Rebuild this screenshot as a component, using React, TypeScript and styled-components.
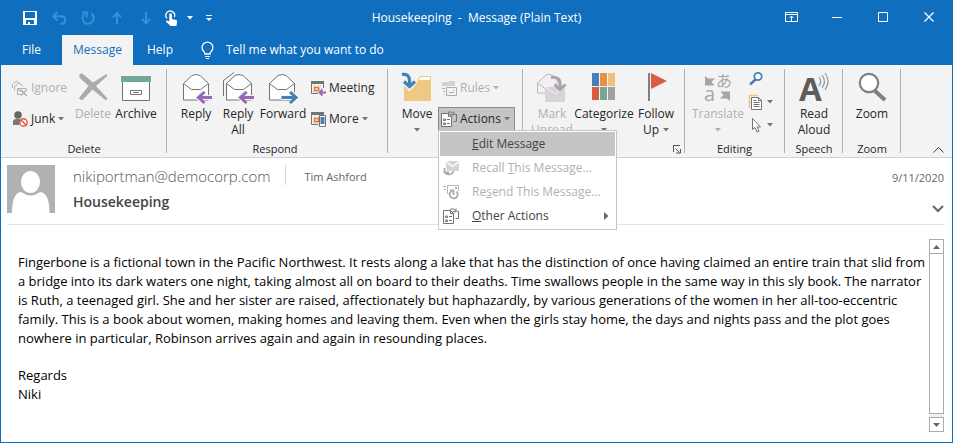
import React from "react";
import styled, { createGlobalStyle, css } from "styled-components";

const BLUE = "#106ebe";
const GREY = "#737373";

const GlobalStyle = createGlobalStyle`
  *, *::before, *::after { box-sizing: border-box; }
  html, body { margin: 0; padding: 0; }
  body { font-family: "Open Sans", "Noto Sans", sans-serif; font-size: 12px; color: #262626; background: #fff; }
  button, input { font: inherit; color: inherit; }
  svg { display: block; flex: none; overflow: visible; }
`;

const plainButton = css`
  appearance: none;
  margin: 0;
  padding: 0;
  border: 0;
  background: transparent;
  line-height: 16px;
`;

const Window = styled.div`
  display: flex;
  flex-direction: column;
  min-height: 100vh;
  border: 1px solid ${BLUE};
  background: #fff;
`;

const TitleBar = styled.header`
  display: grid;
  grid-template-columns: 1fr auto 1fr;
  align-items: center;
  height: 34px;
  background: ${BLUE};
  color: #fff;
`;

const QuickAccess = styled.div`
  display: flex;
  align-items: center;
  padding-left: 20px;
`;

const QuickButton = styled.button<{ $faded?: boolean; $width?: number }>`
  ${plainButton}
  display: flex;
  align-items: center;
  justify-content: center;
  width: ${(p) => p.$width ?? 28}px;
  height: 24px;
  color: ${(p) => (p.$faded ? "#3a90d6" : "#fff")};
`;

const Title = styled.h1`
  margin: 0;
  font-size: 12px;
  font-weight: 400;
  line-height: 16px;
  white-space: pre;
`;

const WindowControls = styled.div`
  display: flex;
  justify-content: flex-end;
`;

const ControlButton = styled.button`
  ${plainButton}
  display: flex;
  align-items: center;
  justify-content: center;
  width: 46px;
  height: 30px;
  color: #fff;
`;

const TabBar = styled.nav`
  display: flex;
  height: 30px;
  background: ${BLUE};
  color: #fff;
`;

const Tab = styled.button<{ $active?: boolean; $width: number }>`
  ${plainButton}
  width: ${(p) => p.$width}px;
  background: ${(p) => (p.$active ? "#f3f3f3" : "transparent")};
  color: ${(p) => (p.$active ? BLUE : "#fff")};
  text-align: center;
`;

const TellMe = styled.button`
  ${plainButton}
  display: flex;
  align-items: center;
  gap: 12px;
  padding-left: 14px;
`;

const Ribbon = styled.section`
  display: flex;
  height: 93px;
  background: #f3f3f3;
  border-bottom: 1px solid #d2d2d2;
`;

const Group = styled.section<{ $left?: number; $right?: number }>`
  display: flex;
  flex-direction: column;
  position: relative;
  padding: 0 ${(p) => p.$right ?? 6}px 0 ${(p) => p.$left ?? 8}px;
`;

const GroupBody = styled.div`
  display: flex;
  flex: 1;
`;

const GroupLabel = styled.h2`
  margin: 0;
  font-size: 11px;
  font-weight: 400;
  line-height: 16px;
  text-align: center;
`;

const Divider = styled.span`
  width: 1px;
  margin: 4px 0;
  background: #b1b1b1;
`;

const BigButton = styled.button<{ $width: number }>`
  ${plainButton}
  display: flex;
  flex-direction: column;
  align-items: center;
  width: ${(p) => p.$width}px;
  padding-top: 7px;
  white-space: nowrap;
  &:disabled { color: #b1b1b1; }
  svg + span { margin-top: 2px; }
`;

const BigLine = styled.span`
  display: flex;
  align-items: center;
  justify-content: center;
  gap: 4px;
  height: 16px;
`;

const SmallColumn = styled.div<{ $width?: number; $top?: number; $gap?: number }>`
  display: flex;
  flex-direction: column;
  gap: ${(p) => p.$gap ?? 7}px;
  width: ${(p) => (p.$width ? `${p.$width}px` : "auto")};
  padding-top: ${(p) => p.$top ?? 11}px;
`;

const SmallButton = styled.button<{ $pressed?: boolean; $height?: number }>`
  ${plainButton}
  display: flex;
  align-items: center;
  gap: 3px;
  height: ${(p) => p.$height ?? 24}px;
  padding: 0 2px;
  border: 1px solid ${(p) => (p.$pressed ? "#8a8a8a" : "transparent")};
  background: ${(p) => (p.$pressed ? "#c5c5c5" : "transparent")};
  white-space: nowrap;
  &:disabled { color: #b1b1b1; }
`;

const MenuAnchor = styled.div`
  display: grid;
  position: relative;
`;

const Menu = styled.div`
  position: absolute;
  top: 100%;
  left: 0;
  z-index: 2;
  width: 179px;
  margin-top: -1px;
  padding: 1px;
  border: 1px solid #c6c6c6;
  background: #fff;
`;

const MenuItem = styled.button<{ $hot?: boolean }>`
  ${plainButton}
  display: grid;
  grid-template-columns: 32px 1fr 14px;
  align-items: center;
  width: 100%;
  height: 24px;
  color: #444;
  background: ${(p) => (p.$hot ? "#c5c5c5" : "transparent")};
  text-align: left;
  white-space: nowrap;
  &:disabled { color: #b1b1b1; }
  svg { margin-left: 3px; }
`;

const Launcher = styled.button`
  ${plainButton}
  position: absolute;
  right: 3px;
  bottom: 3px;
`;

const CollapseButton = styled.button`
  ${plainButton}
  align-self: flex-end;
  margin-left: auto;
  padding: 0 8px 4px;
`;

const MessageHeader = styled.header`
  display: flex;
  margin: 0 7px 0 6px;
  padding: 7px 0 11px;
  border-bottom: 1px solid #e1e1e1;
`;

const HeaderText = styled.div`
  flex: 1;
  padding-left: 18px;
`;

const SenderRow = styled.div`
  display: flex;
  height: 20px;
`;

const Sender = styled.span`
  color: #555;
  font-size: 15px;
  font-weight: 300;
  line-height: 22px;
`;

const Recipient = styled.span`
  margin-left: 15px;
  padding-left: 18px;
  border-left: 1px solid #d8d8d8;
  color: #666;
  font-size: 11px;
  line-height: 24px;
`;

const Subject = styled.h2`
  margin: 7px 0 0;
  color: #444;
  font-size: 14px;
  font-weight: 600;
  line-height: 20px;
`;

const HeaderSide = styled.div`
  display: flex;
  flex-direction: column;
  justify-content: space-between;
  align-items: flex-end;
  padding: 5px 1px 0 0;
  color: #666;
  font-size: 11px;
  line-height: 16px;
`;

const Content = styled.main`
  display: flex;
  flex: 1;
  gap: 2px;
  padding: 14px 8px 10px 17px;
`;

const Letter = styled.article`
  flex: 1;
  min-width: 0;
  padding-top: 14px;
  color: #000;
  font-size: 13px;
  line-height: 19px;
  white-space: nowrap;
  p { margin: 0 0 18px; }
`;

const ScrollBar = styled.div`
  display: flex;
  flex: none;
  flex-direction: column;
  width: 15px;
  background: #f0f0f0;
`;

const ScrollButton = styled.button`
  ${plainButton}
  display: flex;
  align-items: center;
  justify-content: center;
  height: 15px;
  border: 1px solid #ababab;
  background: #fff;
`;

const ScrollThumb = styled.div`
  flex: 1;
  margin-bottom: 3px;
  border: 1px solid #ababab;
  border-top: 0;
  background: #fff;
`;

const Caret = ({ color = GREY }: { color?: string }) => (
  <svg width="6" height="4" viewBox="0 0 6 4"><path d="M0 0h6L3 3.5z" fill={color} /></svg>
);

type IconProps = { size?: number; children: React.ReactNode };
const Icon = ({ size = 16, children }: IconProps) => (
  <svg width={size} height={size} viewBox={`0 0 ${size} ${size}`} fill="none" aria-hidden="true">{children}</svg>
);

const SaveIcon = () => (
  <Icon><path d="M1 1h14v14H1z" fill="#fff" /><path d="M3 2h10v6H3zM4 10h8v4H4z" fill={BLUE} /><path d="M6 12h2v2H6z" fill="#fff" /></Icon>
);
const UndoIcon = () => (
  <Icon><path d="M6.5 2L2.2 6.2l4.3 4.3M2.5 6.2h8a3.8 3.8 0 0 1 0 7.6H9" stroke="currentColor" strokeWidth="2" /></Icon>
);
const RepeatIcon = () => (
  <Icon><path d="M11 3.3a5.6 5.6 0 1 1-6.4.5M2 2.3h4.8v5" stroke="currentColor" strokeWidth="2" /></Icon>
);
const UpIcon = () => (
  <Icon><path d="M8 14V3M4 7.2L8 3l4 4.2" stroke="currentColor" strokeWidth="2" /></Icon>
);
const DownIcon = () => (
  <Icon><path d="M8 2v11M4 9l4 4.2L12 9" stroke="currentColor" strokeWidth="2" /></Icon>
);
const TouchIcon = () => (
  <Icon>
    <path d="M4 8.4A4.4 4.4 0 1 1 11.4 7" stroke="#fff" strokeWidth="1.3" />
    <path d="M6.3 4.6a1.3 1.3 0 0 1 2.6 0V9l4.3 1q1 .3.8 1.4L13.5 16H7.6L2.8 11.4q.8-1.4 2.2-.6l1.3.8z" fill="#fff" />
  </Icon>
);
const CustomizeIcon = () => (
  <svg width="6" height="6" viewBox="0 0 6 6"><path d="M0 0h6v1H0zM0 3h6L3 6z" fill="#fff" /></svg>
);
const BulbIcon = () => (
  <svg width="13" height="17" viewBox="0 0 13 17" fill="none">
    <path d="M4 12c0-2.5-3-3-3-6.4a5.4 5.4 0 0 1 10.9 0C11.9 9 9 9.5 9 12z" stroke="#fff" strokeWidth="1.3" />
    <path d="M4 14.5h5M5 16.5h3" stroke="#fff" />
  </svg>
);

const IgnoreIcon = () => (
  <Icon>
    <path d="M.5 8V4.5L4.5 1l4 3M2.5 10V6.5L6.5 3l4.5 3M9 14.5H5.5v-6h9" stroke="#b1b1b1" />
    <path d="M5.5 8.5l3.5 3M9 10l6 6M15 9.5l-6 6" stroke="#b1b1b1" strokeWidth="1.3" />
  </Icon>
);
const JunkIcon = () => (
  <Icon>
    <circle cx="6" cy="4" r="3.8" fill="#666" />
    <path d="M1 14V10.5Q1 8 4 8h4l1 1-2 5z" fill="#777" />
    <circle cx="11.5" cy="11.5" r="3.7" fill="#fff" stroke="#dc5939" strokeWidth="1.4" />
    <path d="M9 9l5 5" stroke="#dc5939" strokeWidth="1.4" />
  </Icon>
);
const DeleteIcon = () => (
  <Icon size={32}><path d="M2 3.5Q3.5 0 7 3L16 10.5 29.5 2l1 1.8L19 14 30.5 26.5 29 28.5 15.5 17.5 6 27.5q-2.5 1.5-4-1.5L11.5 14 3 6z" fill="#ababab" /></Icon>
);
const ArchiveIcon = () => (
  <Icon size={32}>
    <path d="M2.5 9.5h27v19h-27z" fill="#fff" stroke={GREY} />
    <path d="M1 4h30v6H1z" fill="#73a896" />
    <path d="M10.5 18.5h11v4h-11zM13 20.5h6" stroke={GREY} />
  </Icon>
);
const Envelope = ({ x = 3 }: { x?: number }) => (
  <g transform={`translate(${x} 0)`} stroke={GREY}>
    <path d="M.5 11.5L9 3.5q4-2 8 0l8.5 8v16.5H.5z" fill="#fff" />
    <path d="M.5 11.5l8 6h9l8-6" />
  </g>
);
const ReplyArrow = () => (
  <>
    <path d="M32 25.5H19M24.5 19l-6 6.5 6 6.5" stroke="#f3f3f3" strokeWidth="5" />
    <path d="M32 25.5H18.5M24.5 20l-6 5.5 6 5.5" stroke="#9668b8" strokeWidth="3" />
  </>
);
const ReplyIcon = () => (<Icon size={32}><Envelope /><ReplyArrow /></Icon>);
const ReplyAllIcon = () => (
  <Icon size={32}><path d="M1.5 24V8.5L12 .5" stroke={GREY} /><Envelope x={4} /><ReplyArrow /></Icon>
);
const ForwardIcon = () => (
  <Icon size={32}>
    <Envelope x={2} />
    <path d="M14 25.5h14M23 19l6 6.5-6 6.5" stroke="#f3f3f3" strokeWidth="5" />
    <path d="M14.5 25.5h14M23 20l6 5.5-6 5.5" stroke="#4680bb" strokeWidth="3" />
  </Icon>
);
const Calendar = () => (
  <>
    <path d="M1 1h13v3H1z" fill={GREY} />
    <path d="M1.5 4v9.5H8M13.5 4v4" stroke={GREY} />
    <path d="M4 6h2M8 6h4M3.5 12h5M9 9h3" stroke="#aaa" strokeDasharray="1 1" />
    <path d="M4.5 7.5h4v3h-4z" stroke="#e8762d" strokeWidth="1.5" />
  </>
);
const MeetingIcon = () => (
  <Icon><Calendar /><path d="M16 12.5H10M12.5 9.5l-3 3 3 3" stroke="#9668b8" strokeWidth="1.8" /></Icon>
);
const MoreIcon = () => (
  <Icon><Calendar /><path d="M9.5 4.5h6v11h-6z" fill="#fff" stroke={GREY} /><path d="M10.5 6h4v7h-4z" fill="#4680bb" /></Icon>
);
const MoveIcon = () => (
  <Icon size={32}>
    <path d="M3 12h12l4-8h11v25H3z" fill="#eec982" />
    <path d="M20 5h9v3H18z" fill="#fff" />
    <path d="M2 3.5q6-1 6.5 5v5.5M3.5 9.5l5 5.5 5-5.5" stroke="#f3f3f3" strokeWidth="6" />
    <path d="M1 2.5q7.5-1 7.5 6v6M3 9.5l5.5 5 5.5-5" stroke="#4680bb" strokeWidth="3.2" />
  </Icon>
);
const RulesIcon = () => (
  <Icon>
    <path d="M1 2h6l1-1h6v5H1z" fill="#d5d0d5" />
    <path d="M1 8.5h3M2 11.5h2M3 14.5h1" stroke="#b1b1b1" />
    <path d="M5.5 7.5h10v8h-10z" fill="#f3f3f3" stroke="#ababab" />
    <path d="M8 12.5h5M12 10.5h1" stroke="#ababab" />
  </Icon>
);
const ActionsIcon = () => (
  <Icon>
    <path d="M7 1.5Q10-.5 12.5 2.5M9.5 3.5l3.5.5V.5" stroke={GREY} />
    <path d="M14 3.5h1.5v7H12.5" stroke={GREY} />
    <path d="M.5 2.5h7l3 3v10H.5z" fill="#fff" stroke={GREY} />
    <path d="M7.5 2.5v3h3" stroke={GREY} />
    <path d="M2.5 8h2v1.5h-2zM2.5 12h2v1.5h-2zM6 8.5h3M6 12.5h3" stroke={GREY} />
  </Icon>
);
const MarkUnreadIcon = () => (
  <Icon size={32}>
    <path d="M1.5 11L10 3q3-1.5 6 0l5 3v15H1.5z" fill="#f3eff3" stroke="#b8b8b8" />
    <path d="M1.5 11l8 6" stroke="#b8b8b8" />
    <path d="M9 15h20v15H9z" fill="#d8d3d8" />
    <path d="M9 15l10 7 10-7" stroke="#f3f3f3" />
    <path d="M15 5.5q9-1 9 6v4M18.5 12.5l5.5 5 5.5-5" stroke="#a6a6a6" strokeWidth="3" />
  </Icon>
);
const CategorizeIcon = () => (
  <Icon size={32}>
    <path d="M4 1h7v13H4z" fill="#4680bb" /><path d="M12 1h7v13h-7z" fill="#e98f43" /><path d="M20 1h7v13h-7z" fill="#eac282" />
    <path d="M4 15h7v13H4z" fill="#d85d44" /><path d="M12 15h7v13h-7z" fill="#73a896" /><path d="M20 15h7v13h-7z" fill="#a0a0a0" />
  </Icon>
);
const FlagIcon = () => (
  <Icon size={32}><path d="M8 1h2v28H8z" fill="#808080" /><path d="M11 1l16 8-16 8z" fill="#d85d44" /></Icon>
);
const TranslateIcon = () => (
  <Icon size={32}>
    <path d="M3 4l3 2.5h7L9.5 10l3 3.5H3z" fill="#a6a6a6" />
    <path d="M28 29l-3-2.5h-7l3.5-3.5-3-3.5H28z" fill="#a6a6a6" />
    <text x="14" y="15" fontSize="16" fill="#a6a6a6" fontFamily="Noto Sans CJK JP, sans-serif">あ</text>
    <text x="2" y="29" fontSize="20" fill="#a6a6a6" fontFamily="Open Sans, sans-serif">a</text>
  </Icon>
);
const FindIcon = () => (
  <Icon><circle cx="10" cy="5.5" r="3.7" fill="#fff" stroke="#4680bb" strokeWidth="1.8" /><path d="M7.5 8.5L2 13.5" stroke="#4680bb" strokeWidth="2.5" /></Icon>
);
const RelatedIcon = () => (
  <Icon>
    <path d="M1.5 14V1.5H10" stroke="#eac282" strokeWidth="1.4" />
    <path d="M3.5 3.5h7l3 3v9h-10z" fill="#fff" stroke={GREY} />
    <path d="M10.5 3.5v3h3M5.5 6.5h3M5.5 8.5h6M5.5 10.5h6M5.5 12.5h6" stroke={GREY} />
  </Icon>
);
const SelectIcon = () => (
  <Icon><path d="M4.5 1.5v11l2.5-2 2 4.5 2-.8-2-4.2h3.5z" fill="#fff" stroke={GREY} /></Icon>
);
const ReadAloudIcon = () => (
  <Icon size={32}>
    <text x="1" y="29" fontSize="33" fontWeight="700" fill="#5c5c5c" fontFamily="Open Sans, sans-serif">A</text>
    <path d="M21 5q3.5 4.5 0 9M24 3q5 6.5 0 13M27 1q6 8.5 0 17" stroke="#999" strokeWidth="1.2" />
  </Icon>
);
const ZoomIcon = () => (
  <Icon size={32}><path d="M18.5 18.5L29 28" stroke="#7f7f7f" strokeWidth="4" /><circle cx="13" cy="11" r="9.2" fill="#fff" stroke="#7f7f7f" strokeWidth="2.2" /></Icon>
);
const RecallIcon = () => (
  <Icon>
    <path d="M3 1h13v10H3z" fill="#d8d3d8" /><path d="M3 1.5l6.5 5 6.5-5" stroke="#fff" strokeWidth="1.3" />
    <path d="M1.5 8v4.5H6M2 12q2 3.5 6 2 2-1 2.5-3" stroke="#fff" strokeWidth="4" />
    <path d="M1.5 8v4.5H6M2 12q2 3.5 6 2 2-1 2.5-3" stroke="#ababab" strokeWidth="1.8" />
  </Icon>
);
const ResendIcon = () => (
  <Icon>
    <path d="M0 2.5h3M1 5.5h2" stroke="#ababab" /><path d="M6 9.5H4.5v-8h11v5" stroke="#b8b8b8" />
    <path d="M12 3h2v2h-2z" fill="#ababab" />
    <path d="M13.5 7.5a4 4 0 1 1-5-.5M7 6.5h3.5V11" stroke="#ababab" strokeWidth="1.8" />
  </Icon>
);

export default function App() {
  return (
    <>
      <GlobalStyle />
      <Window>
        <TitleBar>
          <QuickAccess>
            <QuickButton $width={18} aria-label="Save"><SaveIcon /></QuickButton>
            <QuickButton $width={40} $faded aria-label="Undo"><UndoIcon /></QuickButton>
            <QuickButton $width={18} $faded aria-label="Repeat"><RepeatIcon /></QuickButton>
            <QuickButton $width={40} $faded aria-label="Previous item"><UpIcon /></QuickButton>
            <QuickButton $width={18} $faded aria-label="Next item"><DownIcon /></QuickButton>
            <QuickButton $width={32} aria-label="Touch mode"><TouchIcon /></QuickButton>
            <QuickButton $width={6} aria-label="Touch mode options"><Caret color="#fff" /></QuickButton>
            <QuickButton $width={32} aria-label="Customize toolbar"><CustomizeIcon /></QuickButton>
          </QuickAccess>
          <Title>{"Housekeeping  -  Message (Plain Text)"}</Title>
          <WindowControls>
            <ControlButton aria-label="Ribbon display options">
              <svg width="13" height="11" viewBox="0 0 13 11" fill="none"><path d="M.5-.5h12v9H.5zM.5 1.5h12M6.5 8V3M4.5 5l2-2 2 2" stroke="#fff" /></svg>
            </ControlButton>
            <ControlButton aria-label="Minimize">
              <svg width="11" height="11" viewBox="0 0 11 11"><path d="M0 4h10v1H0z" fill="#fff" /></svg>
            </ControlButton>
            <ControlButton aria-label="Maximize">
              <svg width="11" height="11" viewBox="0 0 11 11" fill="none"><path d="M.5-.5h9v9h-9z" stroke="#fff" /></svg>
            </ControlButton>
            <ControlButton aria-label="Close">
              <svg width="11" height="11" viewBox="0 0 11 11" fill="none"><path d="M.5-.5l9 9M9.5-.5l-9 9" stroke="#fff" strokeWidth="1.2" /></svg>
            </ControlButton>
          </WindowControls>
        </TitleBar>

        <TabBar>
          <Tab $width={61}>File</Tab>
          <Tab $width={71} $active>Message</Tab>
          <Tab $width={54}>Help</Tab>
          <TellMe><BulbIcon />Tell me what you want to do</TellMe>
        </TabBar>

        <Ribbon>
          <Group $left={8} $right={7}>
            <GroupBody>
              <SmallColumn $width={64}>
                <SmallButton disabled><IgnoreIcon />Ignore</SmallButton>
                <SmallButton><JunkIcon />Junk<Caret /></SmallButton>
              </SmallColumn>
              <BigButton $width={40} disabled><DeleteIcon /><BigLine>Delete</BigLine></BigButton>
              <BigButton $width={46}><ArchiveIcon /><BigLine>Archive</BigLine></BigButton>
            </GroupBody>
            <GroupLabel>Delete</GroupLabel>
          </Group>
          <Divider />
          <Group $left={8} $right={12}>
            <GroupBody>
              <BigButton $width={42}><ReplyIcon /><BigLine>Reply</BigLine></BigButton>
              <BigButton $width={42}><ReplyAllIcon /><BigLine>Reply</BigLine><BigLine>All</BigLine></BigButton>
              <BigButton $width={48}><ForwardIcon /><BigLine>Forward</BigLine></BigButton>
              <SmallColumn $width={68}>
                <SmallButton><MeetingIcon />Meeting</SmallButton>
                <SmallButton><MoreIcon />More<Caret /></SmallButton>
              </SmallColumn>
            </GroupBody>
            <GroupLabel>Respond</GroupLabel>
          </Group>
          <Divider />
          <Group $left={8} $right={7}>
            <GroupBody>
              <BigButton $width={42}><MoveIcon /><BigLine>Move</BigLine><BigLine><Caret /></BigLine></BigButton>
              <SmallColumn $width={77}>
                <SmallButton disabled><RulesIcon />Rules<Caret color="#b1b1b1" /></SmallButton>
                <MenuAnchor>
                  <SmallButton $pressed aria-haspopup="menu" aria-expanded="true"><ActionsIcon />Actions<Caret /></SmallButton>
                  <Menu role="menu">
                    <MenuItem role="menuitem" $hot><span /><span><u>E</u>dit Message</span></MenuItem>
                    <MenuItem role="menuitem" disabled><RecallIcon /><span>Recall <u>T</u>his Message...</span></MenuItem>
                    <MenuItem role="menuitem" disabled><ResendIcon /><span>Re<u>s</u>end This Message...</span></MenuItem>
                    <MenuItem role="menuitem">
                      <ActionsIcon /><span><u>O</u>ther Actions</span>
                      <svg width="5" height="8" viewBox="0 0 5 8"><path d="M0 0l4.5 4L0 8z" fill="#666" /></svg>
                    </MenuItem>
                  </Menu>
                </MenuAnchor>
              </SmallColumn>
            </GroupBody>
            <GroupLabel>Move</GroupLabel>
          </Group>
          <Divider />
          <Group $left={7} $right={6}>
            <GroupBody>
              <BigButton $width={44} disabled><MarkUnreadIcon /><BigLine>Mark</BigLine><BigLine>Unread</BigLine></BigButton>
              <BigButton $width={60}><CategorizeIcon /><BigLine>Categorize</BigLine><BigLine><Caret /></BigLine></BigButton>
              <BigButton $width={44}><FlagIcon /><BigLine>Follow</BigLine><BigLine>Up<Caret /></BigLine></BigButton>
            </GroupBody>
            <GroupLabel>Tags</GroupLabel>
            <Launcher aria-label="Tag settings">
              <svg width="8" height="9" viewBox="0 0 8 9" fill="none"><path d="M.5 7V.5H7M2.5 3.5l4 4M7.5 4v4H3" stroke="#555" /></svg>
            </Launcher>
          </Group>
          <Divider />
          <Group $left={6} $right={6}>
            <GroupBody>
              <BigButton $width={54} disabled><TranslateIcon /><BigLine>Translate</BigLine><BigLine><Caret color="#b1b1b1" /></BigLine></BigButton>
              <SmallColumn $width={33} $top={3} $gap={1}>
                <SmallButton $height={22} aria-label="Find"><FindIcon /></SmallButton>
                <SmallButton $height={22} aria-label="Related"><RelatedIcon /><Caret /></SmallButton>
                <SmallButton $height={22} aria-label="Select"><SelectIcon /><Caret /></SmallButton>
              </SmallColumn>
            </GroupBody>
            <GroupLabel>Editing</GroupLabel>
          </Group>
          <Divider />
          <Group $left={7} $right={6}>
            <GroupBody>
              <BigButton $width={44}><ReadAloudIcon /><BigLine>Read</BigLine><BigLine>Aloud</BigLine></BigButton>
            </GroupBody>
            <GroupLabel>Speech</GroupLabel>
          </Group>
          <Divider />
          <Group $left={7} $right={6}>
            <GroupBody>
              <BigButton $width={44}><ZoomIcon /><BigLine>Zoom</BigLine></BigButton>
            </GroupBody>
            <GroupLabel>Zoom</GroupLabel>
          </Group>
          <Divider />
          <CollapseButton aria-label="Collapse the ribbon">
            <svg width="11" height="6" viewBox="0 0 11 6" fill="none"><path d="M.5 5.5l5-5 5 5" stroke="#444" /></svg>
          </CollapseButton>
        </Ribbon>

        <MessageHeader>
          <svg width="48" height="48" viewBox="0 0 48 48">
            <path d="M0 0h48v48H0z" fill="#b1b1b1" />
            <ellipse cx="23.5" cy="17" rx="9.5" ry="11" fill="#fff" />
            <path d="M5 48Q5 28 14 27q10 7 19 0 9.5 1 9.5 21z" fill="#fff" />
          </svg>
          <HeaderText>
            <SenderRow><Sender>nikiportman@democorp.com</Sender><Recipient>Tim Ashford</Recipient></SenderRow>
            <Subject>Housekeeping</Subject>
          </HeaderText>
          <HeaderSide>
            <time dateTime="2020-09-11">9/11/2020</time>
            <svg width="12" height="8" viewBox="0 0 12 8" fill="none"><path d="M1 1l5 5 5-5" stroke="#666" strokeWidth="2" /></svg>
          </HeaderSide>
        </MessageHeader>

        <Content>
          <Letter>
            <p>
              Fingerbone is a fictional town in the Pacific Northwest. It rests along a lake that has the distinction of once having claimed an entire train that slid from<br />
              a bridge into its dark waters one night, taking almost all on board to their deaths. Time swallows people in the same way in this sly book. The narrator<br />
              is Ruth, a teenaged girl. She and her sister are raised, affectionately but haphazardly, by various generations of the women in her all-too-eccentric<br />
              family. This is a book about women, making homes and leaving them. Even when the girls stay home, the days and nights pass and the plot goes<br />
              nowhere in particular, Robinson arrives again and again in resounding places.
            </p>
            <p>Regards<br />Niki</p>
          </Letter>
          <ScrollBar>
            <ScrollButton aria-label="Scroll up"><svg width="7" height="4" viewBox="0 0 7 4"><path d="M0 4h7L3.5 0z" fill="#666" /></svg></ScrollButton>
            <ScrollThumb />
            <ScrollButton aria-label="Scroll down"><svg width="7" height="4" viewBox="0 0 7 4"><path d="M0 0h7L3.5 4z" fill="#666" /></svg></ScrollButton>
          </ScrollBar>
        </Content>
      </Window>
    </>
  );
}
